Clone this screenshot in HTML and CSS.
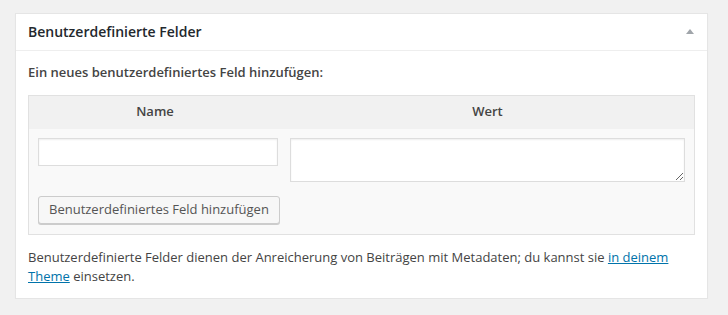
FILE: index.html
```html
<!DOCTYPE html>
<html lang="de">
<head>
  <meta charset="UTF-8">
  <title>Benutzerdefinierte Felder</title>
  <link rel="stylesheet" href="styles.css">
</head>
<body>
  <div class="postbox">
    <div class="hndle">
      <h2>Benutzerdefinierte Felder</h2>
      <span class="toggle-arrow"></span>
    </div>
    <div class="inside">
      <p class="new-field-label"><strong>Ein neues benutzerdefiniertes Feld hinzufügen:</strong></p>
      <table class="newmeta">
        <thead>
          <tr>
            <th class="col-name">Name</th>
            <th class="col-value">Wert</th>
          </tr>
        </thead>
        <tbody>
          <tr>
            <td class="col-name"><input type="text" class="meta-key"></td>
            <td class="col-value"><textarea class="meta-value" rows="2"></textarea></td>
          </tr>
          <tr>
            <td colspan="2" class="submit-cell">
              <button type="button" class="button">Benutzerdefiniertes Feld hinzufügen</button>
            </td>
          </tr>
        </tbody>
      </table>
      <p class="help-text">Benutzerdefinierte Felder dienen der Anreicherung von Beiträgen mit Metadaten; du kannst sie <a href="#">in deinem Theme</a> einsetzen.</p>
    </div>
  </div>
</body>
</html>
```

FILE: styles.css
```css
body {
  margin: 0;
  padding: 13px 0 0 15px;
  background: #f1f1f1;
  font-family: "Open Sans", "Liberation Sans", sans-serif;
  font-size: 13px;
  line-height: 1.5;
  color: #444;
}
.postbox {
  width: 693px;
  box-sizing: border-box;
  background: #fff;
  border: 1px solid #e5e5e5;
  box-shadow: 0 1px 1px rgba(0,0,0,0.04);
}
.hndle {
  display: flex;
  justify-content: space-between;
  align-items: center;
  padding: 8px 12px;
  border-bottom: 1px solid #eee;
}
.hndle h2 {
  margin: 0;
  font-size: 14px;
  font-weight: 600;
  line-height: 1.4;
  color: #23282d;
}
.toggle-arrow {
  width: 0;
  height: 0;
  margin-right: 1px;
  border-left: 4px solid transparent;
  border-right: 4px solid transparent;
  border-bottom: 5px solid #a0a5aa;
}
.inside {
  padding: 12px 12px 11px;
}
.new-field-label {
  margin: 0 0 13px;
}
.new-field-label strong {
  font-weight: 600;
}
.newmeta {
  width: 100%;
  table-layout: fixed;
  border: 1px solid #e1e1e1;
  border-spacing: 0;
  background: #f9f9f9;
}
.newmeta th {
  background: #f1f1f1;
  font-weight: 600;
  text-align: center;
  padding: 6px 6px 7px 0;
}
.newmeta th.col-name {
  width: 258px;
  box-sizing: border-box;
}
.newmeta td {
  vertical-align: top;
  padding: 9px 9px 0;
}
.meta-key,
.meta-value {
  display: block;
  width: 100%;
  box-sizing: border-box;
  margin: 0;
  border: 1px solid #ddd;
  box-shadow: inset 0 1px 2px rgba(0,0,0,0.07);
  background: #fff;
  font-family: inherit;
  font-size: 14px;
}
.meta-key {
  height: 28px;
}
.meta-value {
  height: 44px;
  resize: both;
}
.newmeta td.col-value {
  padding-left: 3px;
}
.newmeta td.submit-cell {
  padding: 14px 9px 10px;
}
.button {
  height: 28px;
  padding: 0 10px 1px;
  font-family: inherit;
  font-size: 13px;
  color: #555;
  background: #f7f7f7;
  border: 1px solid #ccc;
  border-radius: 3px;
  box-shadow: 0 1px 0 #ccc;
  cursor: pointer;
}
.help-text {
  margin: 13px 0 0;
}
.help-text a {
  color: #0073aa;
}
```
